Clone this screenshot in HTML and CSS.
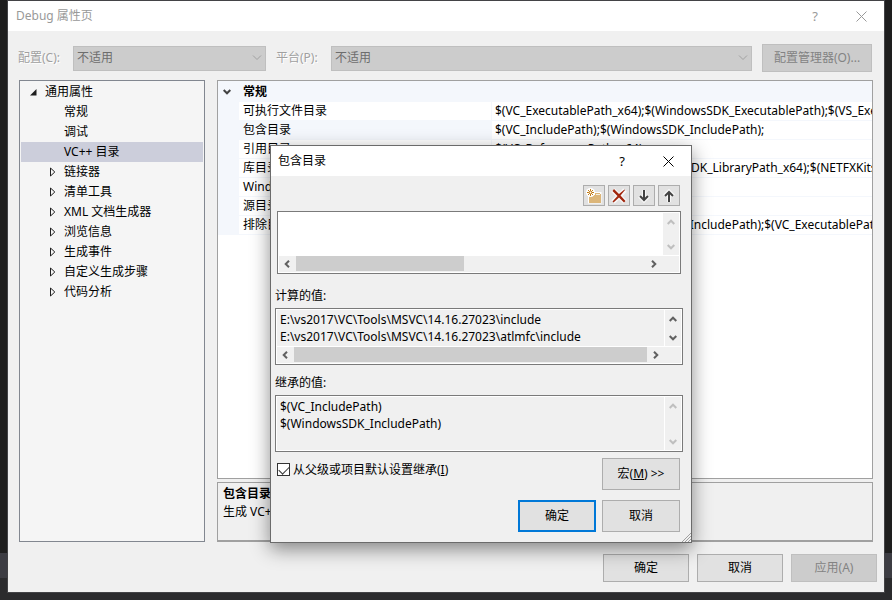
FILE: index.html
```html
<!doctype html>
<html lang="zh-CN">
  <head>
    <meta charset="UTF-8" />
    <meta name="viewport" content="width=device-width, initial-scale=1.0" />
    <title>Debug 属性页</title>
    <link rel="stylesheet" href="styles.css">
  </head>
  <body>
    <svg class="sprite" aria-hidden="true">
      <symbol id="up" viewBox="0 0 8 6"><path d="M0.7 5 L4 1.7 L7.3 5" /></symbol>
      <symbol id="down" viewBox="0 0 8 6"><path d="M0.7 1 L4 4.3 L7.3 1" /></symbol>
      <symbol id="left" viewBox="0 0 6 8"><path d="M5 0.7 L1.7 4 L5 7.3" /></symbol>
      <symbol id="right" viewBox="0 0 6 8"><path d="M1 0.7 L4.3 4 L1 7.3" /></symbol>
      <symbol id="close" viewBox="0 0 11 11"><path d="M0.5 0.5 L10.5 10.5 M10.5 0.5 L0.5 10.5" /></symbol>
      <symbol id="node" viewBox="0 0 6 10"><path d="M0.5 1 L4.8 5 L0.5 9 Z" /></symbol>
    </svg>

    <div class="window">
      <header class="titlebar inactive">
        <h1>Debug 属性页</h1>
        <button class="sys" aria-label="帮助">?</button>
        <button class="sys" aria-label="关闭"><svg width="11" height="11"><use href="#close" /></svg></button>
      </header>

      <div class="config">
        <label for="config">配置(C):</label>
        <div class="combo combo-small">
          <select id="config" disabled>
            <option>不适用</option>
          </select>
          <svg width="10" height="6"><path d="M1 0.5 L5 4.5 L9 0.5" /></svg>
        </div>
        <label for="platform">平台(P):</label>
        <div class="combo">
          <select id="platform" disabled>
            <option>不适用</option>
          </select>
          <svg width="10" height="6"><path d="M1 0.5 L5 4.5 L9 0.5" /></svg>
        </div>
        <button class="btn manager" disabled>配置管理器(O)...</button>
      </div>

      <main class="main">
        <ul class="tree">
          <li class="root"><svg width="7" height="7"><path d="M6.5 0 V6.5 H0 Z" /></svg>通用属性</li>
          <li>常规</li>
          <li>调试</li>
          <li class="selected">VC++ 目录</li>
          <li><svg width="6" height="10"><use href="#node" /></svg>链接器</li>
          <li><svg width="6" height="10"><use href="#node" /></svg>清单工具</li>
          <li><svg width="6" height="10"><use href="#node" /></svg>XML 文档生成器</li>
          <li><svg width="6" height="10"><use href="#node" /></svg>浏览信息</li>
          <li><svg width="6" height="10"><use href="#node" /></svg>生成事件</li>
          <li><svg width="6" height="10"><use href="#node" /></svg>自定义生成步骤</li>
          <li><svg width="6" height="10"><use href="#node" /></svg>代码分析</li>
        </ul>

        <div class="right">
          <div class="grid">
            <table>
              <thead>
                <tr>
                  <th class="gutter"><svg width="8" height="6"><use href="#down" /></svg></th>
                  <th class="name">常规</th>
                  <th></th>
                </tr>
              </thead>
              <tbody>
                <tr>
                  <td class="gutter"></td>
                  <td class="name">可执行文件目录</td>
                  <td>$(VC_ExecutablePath_x64);$(WindowsSDK_ExecutablePath);$(VS_ExecutablePath);</td>
                </tr>
                <tr class="current">
                  <td class="gutter"></td>
                  <td class="name">包含目录</td>
                  <td>$(VC_IncludePath);$(WindowsSDK_IncludePath);</td>
                </tr>
                <tr>
                  <td class="gutter"></td>
                  <td class="name">引用目录</td>
                  <td>$(VC_ReferencesPath_x64);</td>
                </tr>
                <tr>
                  <td class="gutter"></td>
                  <td class="name">库目录</td>
                  <td>$(VC_LibraryPath_x64);$(WindowsSDK_LibraryPath_x64);$(NETFXKitsDir)Lib\um\x64</td>
                </tr>
                <tr>
                  <td class="gutter"></td>
                  <td class="name">Windows 运行库目录</td>
                  <td>$(WindowsSDK_MetadataPath);</td>
                </tr>
                <tr>
                  <td class="gutter"></td>
                  <td class="name">源目录</td>
                  <td>$(VC_SourcePath);</td>
                </tr>
                <tr>
                  <td class="gutter"></td>
                  <td class="name">排除目录</td>
                  <td>$(VC_IncludePath);$(WindowsSDK_IncludePath);$(VC_ExecutablePath_x64);</td>
                </tr>
              </tbody>
            </table>
          </div>
          <div class="desc">
            <h2>包含目录</h2>
            <p>生成 VC++ 项目期间，搜索包含文件时使用的路径。</p>
          </div>
        </div>
      </main>

      <footer class="footer">
        <button class="btn">确定</button>
        <button class="btn">取消</button>
        <button class="btn" disabled>应用(A)</button>
      </footer>
    </div>

    <div class="dialog" role="dialog" aria-labelledby="dialog-title">
      <header class="titlebar">
        <h1 id="dialog-title">包含目录</h1>
        <button class="sys" aria-label="帮助">?</button>
        <button class="sys" aria-label="关闭"><svg width="11" height="11"><use href="#close" /></svg></button>
      </header>

      <div class="tools">
        <button aria-label="新行">
          <svg width="16" height="16">
            <path d="M2 6 H8 L9 4 H15.5 V15.5 H2 Z" fill="#fff" />
            <path d="M3 7 H9 V5 H14 V6 H15 V15 H3 Z" fill="#dcb67a" />
            <path d="M10 6.5 H14" stroke="#f7efe0" />
            <circle cx="4.5" cy="4.5" r="4.5" fill="#fff" />
            <path d="M4.5 1 V8 M1 4.5 H8 M2 2 L7 7 M7 2 L2 7" stroke="#c27d1a" />
            <circle cx="4.5" cy="4.5" r="1" fill="#fff" />
          </svg>
        </button>
        <button aria-label="删除">
          <svg width="16" height="16">
            <path d="M2 2 L14 14 M14 2 L2 14" stroke="#f6f6f6" stroke-width="5" />
            <path d="M3 1 L8 6 L13.5 1.5 L14 2 L9.5 7.5 L14.5 13 L13 14.5 L8 9.5 L2.5 14.5 L1.5 13.5 L6.5 8 L1.5 3 Z" fill="#a1260d" />
          </svg>
        </button>
        <button aria-label="下移">
          <svg width="16" height="16">
            <path d="M8 2 V13 M3.5 8 L8 12.5 L12.5 8" fill="none" stroke="#f6f6f6" stroke-width="4" />
            <path d="M8 2 V12 M4 8 L8 12 L12 8" fill="none" stroke="#424242" stroke-width="2" />
          </svg>
        </button>
        <button aria-label="上移">
          <svg width="16" height="16">
            <path d="M8 14 V3 M3.5 8 L8 3.5 L12.5 8" fill="none" stroke="#f6f6f6" stroke-width="4" />
            <path d="M8 14 V4 M4 8 L8 4 L12 8" fill="none" stroke="#424242" stroke-width="2" />
          </svg>
        </button>
      </div>

      <div class="box box-edit">
        <textarea aria-label="包含目录"></textarea>
        <div class="vbar off">
          <svg width="8" height="6"><use href="#up" /></svg>
          <svg width="8" height="6"><use href="#down" /></svg>
        </div>
        <div class="hbar">
          <svg width="6" height="8"><use href="#left" /></svg>
          <div class="track"><div class="thumb" style="width: 48%"></div></div>
          <svg width="6" height="8"><use href="#right" /></svg>
        </div>
      </div>

      <label class="caption" for="evaluated">计算的值:</label>
      <div class="box">
        <textarea id="evaluated" readonly>E:\vs2017\VC\Tools\MSVC\14.16.27023\include
E:\vs2017\VC\Tools\MSVC\14.16.27023\atlmfc\include</textarea>
        <div class="vbar">
          <svg width="8" height="6"><use href="#up" /></svg>
          <svg width="8" height="6"><use href="#down" /></svg>
        </div>
        <div class="hbar">
          <svg width="6" height="8"><use href="#left" /></svg>
          <div class="track"><div class="thumb" style="width: 100%"></div></div>
          <svg width="6" height="8"><use href="#right" /></svg>
        </div>
      </div>

      <label class="caption" for="inherited">继承的值:</label>
      <div class="box">
        <textarea id="inherited" readonly>$(VC_IncludePath)
$(WindowsSDK_IncludePath)</textarea>
        <div class="vbar off">
          <svg width="8" height="6"><use href="#up" /></svg>
          <svg width="8" height="6"><use href="#down" /></svg>
        </div>
      </div>

      <div class="options">
        <label class="check"><input type="checkbox" checked />从父级或项目默认设置继承(<u>I</u>)</label>
        <button class="btn">宏(<u>M</u>) &gt;&gt;</button>
      </div>
      <div class="actions">
        <button class="btn default">确定</button>
        <button class="btn">取消</button>
      </div>
      <svg class="grip" width="9" height="9"><path d="M0 9 L9 0 M3 9 L9 3 M6 9 L9 6" /></svg>
    </div>
  </body>
</html>
```

FILE: styles.css
```css
* {
  box-sizing: border-box;
}
body {
  margin: 0;
  min-height: 100vh;
  padding: 0 7px 7px;
  display: flex;
  position: relative;
  font: 12px/20px "Noto Sans", "Noto Sans CJK SC", sans-serif;
  color: #000;
  background: linear-gradient(to top, #2b2b2d 22px, #3c3c42 22px, #3c3c42 47px, #1e1e1e 47px);
}
button,
select,
textarea {
  font: inherit;
  color: inherit;
}
h1,
h2,
p,
ul {
  margin: 0;
  padding: 0;
  font-size: 12px;
}
svg {
  flex: none;
}
.sprite {
  position: absolute;
  width: 0;
  height: 0;
}
.window {
  flex: 1;
  min-width: 0;
  display: flex;
  flex-direction: column;
  background: #f0f0f0;
  border: 1px solid #434346;
}

/* title bars */
.titlebar {
  display: flex;
  align-items: center;
  height: 30px;
  padding-left: 7px;
  background: #fff;
}
.titlebar h1 {
  flex: 1;
  font-weight: normal;
}
.titlebar.inactive {
  padding-left: 8px;
  color: #999;
}
.sys {
  display: flex;
  align-items: center;
  justify-content: center;
  width: 46px;
  height: 28px;
  padding: 0;
  border: 0;
  background: none;
  font-size: 13px;
}
.sys svg {
  stroke: currentColor;
}

/* configuration row */
.config {
  display: flex;
  align-items: center;
  gap: 10px;
  padding: 13px 12px 8px 10px;
}
.config label {
  width: 45px;
  color: #a0a0a0;
  text-shadow: 1px 1px #fff;
  white-space: nowrap;
}
.combo {
  flex: 1;
  display: flex;
  align-items: center;
  height: 25px;
  padding-right: 3px;
  background: #ccc;
  border: 1px solid #bfbfbf;
}
.combo-small {
  flex: 0 0 193px;
}
.combo select {
  flex: 1;
  appearance: none;
  padding: 0 3px;
  border: 0;
  background: none;
  color: #6d6d6d;
  opacity: 1;
}
.combo svg {
  fill: none;
  stroke: #a0a0a0;
}
.btn {
  width: 86px;
  height: 28px;
  padding: 0;
  background: #e1e1e1;
  border: 1px solid #adadad;
}
.btn:disabled {
  background: #ccc;
  border-color: #bfbfbf;
  color: #838383;
}
.manager {
  width: 110px;
}

/* tree and property grid */
.main {
  flex: 1;
  display: flex;
  gap: 12px;
  padding: 0 11px;
}
.tree {
  width: 186px;
  padding: 1px;
  list-style: none;
  background: #f5f5f5;
  border: 1px solid #828790;
}
.tree li {
  display: flex;
  align-items: center;
  height: 20px;
  padding-left: 43px;
}
.tree li:has(svg) {
  padding-left: 29px;
  gap: 8px;
}
.tree li.root {
  padding-left: 9px;
}
.tree .selected {
  background: #cccedb;
}
.tree svg {
  fill: none;
  stroke: #1e1e1e;
}
.tree .root svg {
  fill: #1e1e1e;
  stroke: none;
}
.right {
  flex: 1;
  min-width: 0;
  display: flex;
  flex-direction: column;
  gap: 3px;
}
.grid {
  flex: 1;
  background: #fff;
  border: 1px solid #a0a0a0;
}
table {
  width: 100%;
  table-layout: fixed;
  border-collapse: separate;
  border-spacing: 0;
}
th,
td {
  height: 19px;
  padding: 0 0 0 3px;
  line-height: 18px;
  text-align: left;
  white-space: nowrap;
  overflow: hidden;
}
th {
  height: 21px;
  background: #f4f7fc;
}
th svg {
  display: block;
  fill: none;
  stroke: #424242;
  stroke-width: 2;
}
td {
  border-bottom: 1px solid #f4f7fc;
}
.gutter {
  width: 21px;
  padding-left: 5px;
  background: #f4f7fc;
}
.name {
  width: 253px;
  padding-left: 4px;
}
td.name {
  border-right: 1px solid #f4f7fc;
}
.current .name {
  background: #f4f7fc;
}
.desc {
  height: 60px;
  padding: 2px 5px;
  border: 1px solid #a0a0a0;
  border-bottom-width: 2px;
  line-height: 18px;
}
.footer {
  display: flex;
  justify-content: flex-end;
  gap: 8px;
  padding: 12px 7px 10px;
}

/* include directories dialog */
.dialog {
  position: absolute;
  left: 270px;
  top: 145px;
  width: 422px;
  padding-bottom: 10px;
  background: #f0f0f0;
  border: 1px solid #6b6b6b;
  box-shadow: 0 6px 18px rgba(0, 0, 0, 0.45);
}
.tools {
  display: flex;
  justify-content: flex-end;
  gap: 3px;
  padding: 9px 11px 5px;
}
.tools button {
  display: flex;
  align-items: center;
  justify-content: center;
  width: 22px;
  height: 21px;
  padding: 0;
  background: #e1e1e1;
  border: 1px solid #adadad;
}
.box {
  display: grid;
  grid-template: 1fr auto / 1fr auto;
  height: 57px;
  margin: 0 8px 0 4px;
  padding: 1px;
  background: #f0f0f0;
  border: 1px solid #7a7a7a;
  box-shadow: inset 0 0 0 1px #fff;
}
.box-edit {
  height: 63px;
  margin: 0 10px 0 6px;
}
.box textarea {
  min-width: 0;
  height: 100%;
  padding: 1px 3px;
  line-height: 17px;
  border: 0;
  outline: 0;
  resize: none;
  overflow: hidden;
  white-space: pre;
  background: #f0f0f0;
}
.box-edit textarea {
  background: #fff;
}
.vbar {
  display: flex;
  flex-direction: column;
  align-items: center;
  justify-content: space-between;
  width: 17px;
  padding: 6px 0 5px;
  background: #f0f0f0;
  border-left: 1px solid #fff;
}
.hbar {
  grid-column: 1 / 3;
  display: flex;
  align-items: center;
  gap: 6px;
  height: 17px;
  padding: 0 22px 1px 5px;
  background: #f0f0f0;
  border-top: 1px solid #fff;
}
.track {
  flex: 1;
  height: 15px;
}
.thumb {
  height: 15px;
  background: #cdcdcd;
}
.vbar svg,
.hbar svg {
  fill: none;
  stroke: #606060;
  stroke-width: 2;
}
.vbar.off svg {
  stroke: #bfbfbf;
}
.caption {
  display: block;
  margin: 0 4px;
  padding: 8px 0 2px;
}
.box-edit + .caption {
  padding: 12px 0 2px;
}
.options,
.actions {
  display: flex;
  justify-content: space-between;
  align-items: flex-start;
  padding: 6px 11px 0 6px;
}
.actions {
  justify-content: flex-end;
  gap: 6px;
  padding-top: 10px;
}
.dialog .btn {
  width: 78px;
  height: 32px;
}
.dialog .default {
  border: 2px solid #0078d7;
}
.check {
  display: flex;
  align-items: center;
  height: 23px;
}
.check input {
  appearance: none;
  display: flex;
  justify-content: center;
  width: 13px;
  height: 13px;
  margin: 0 3px 0 0;
  background: #fff;
  border: 1px solid #333;
}
.check input:checked::after {
  content: "";
  width: 9px;
  height: 5px;
  margin-top: 2px;
  border: solid #333;
  border-width: 0 0 1px 1px;
  transform: rotate(-45deg);
}
.grip {
  position: absolute;
  right: 0;
  bottom: 0;
  stroke: #a0a0a0;
}
```
